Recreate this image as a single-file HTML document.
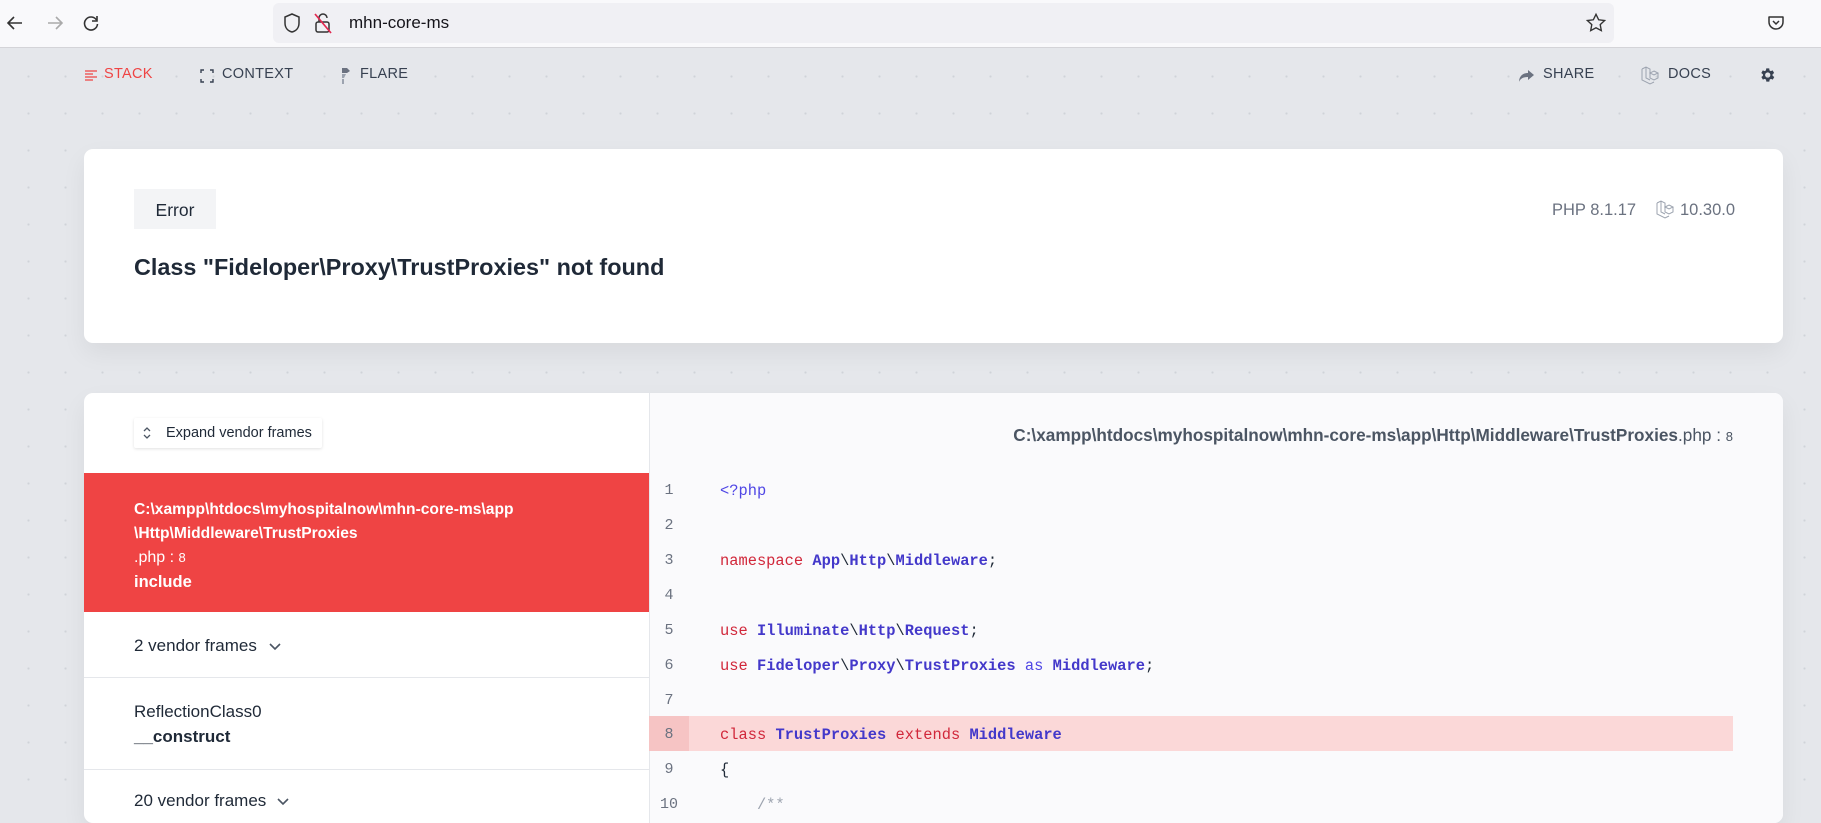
<!DOCTYPE html>
<html><head><meta charset="utf-8"><style>
*{box-sizing:border-box;margin:0;padding:0}
body{width:1821px;height:804px;overflow:hidden;font-family:"Liberation Sans",sans-serif;background:#e5e7eb;position:relative;color:#1f2937}
.bg{position:absolute;left:0;top:48px;width:1821px;height:756px;background-color:#e5e7eb;background-image:radial-gradient(circle,#d0d3d8 1px,transparent 1.2px);background-size:37px 37px;background-position:10px 10px}
.chrome{position:absolute;left:0;top:0;width:1821px;height:48px;background:#f9f9fb;border-bottom:1px solid #d4d4d8}
.url{position:absolute;left:273px;top:3px;width:1341px;height:40px;background:#f0f0f4;border-radius:6px}
.abs{position:absolute}
.nav{position:absolute;top:66px;font-size:14.5px;color:#374151;letter-spacing:.3px}
.card{position:absolute;background:#fff;border-radius:9px;box-shadow:0 10px 25px rgba(0,0,0,.06)}
.code{font-family:"Liberation Mono",monospace;font-size:15.4px}
.ln{position:absolute;left:649px;width:56px;text-align:center;color:#6b7280;font-family:"Liberation Mono",monospace;font-size:15px}
.cl{position:absolute;left:720px;white-space:pre}
.k{color:#d1273a}.c{color:#4338ca;font-weight:bold}.p{color:#4f46e5}
</style></head><body>
<div class="bg"></div>
<div class="chrome">
 <svg class="abs" style="left:4px;top:12px" width="22" height="22" viewBox="0 0 22 22"><path d="M18 11H4M10 5l-6 6 6 6" stroke="#333" stroke-width="1.6" fill="none"/></svg>
 <svg class="abs" style="left:44px;top:12px" width="22" height="22" viewBox="0 0 22 22"><path d="M4 11h14M12 5l6 6-6 6" stroke="#aaa" stroke-width="1.6" fill="none"/></svg>
 <svg class="abs" style="left:80px;top:12px" width="22" height="22" viewBox="0 0 22 22"><path d="M16.5 8A6.5 6.5 0 1 0 17.5 12" stroke="#333" stroke-width="1.6" fill="none"/><path d="M17 4v5h-5" stroke="#333" stroke-width="1.6" fill="none"/></svg>
 <div class="url"></div>
 <svg class="abs" style="left:282px;top:12px" width="20" height="22" viewBox="0 0 20 22"><path d="M10 2L3 5v6c0 5 3 8 7 9 4-1 7-4 7-9V5z" stroke="#333" stroke-width="1.5" fill="none"/></svg>
 <svg class="abs" style="left:313px;top:11px" width="20" height="24" viewBox="0 0 20 24"><rect x="3" y="11" width="13" height="10" rx="2" stroke="#333" stroke-width="1.5" fill="none"/><path d="M6 11V7a4 4 0 0 1 8 0" stroke="#333" stroke-width="1.5" fill="none"/><path d="M2 3l16 19" stroke="#e22850" stroke-width="1.7"/></svg>
 <div class="abs" style="left:349px;top:13px;font-size:17px;color:#15141a">mhn-core-ms</div>
 <svg class="abs" style="left:1585px;top:12px" width="22" height="22" viewBox="0 0 24 24"><path d="M12 2.5l2.9 6 6.5.8-4.8 4.5 1.2 6.5L12 17.2l-5.8 3.1 1.2-6.5L2.6 9.3l6.5-.8z" stroke="#333" stroke-width="1.5" fill="none"/></svg>
 <svg class="abs" style="left:1766px;top:13px" width="20" height="20" viewBox="0 0 20 20"><path d="M3 4h14v5a7 7 0 0 1-14 0z" stroke="#333" stroke-width="1.5" fill="none" stroke-linejoin="round"/><path d="M7 8l3 3 3-3" stroke="#333" stroke-width="1.5" fill="none"/></svg>
</div>

<svg class="abs" style="left:84px;top:69px" width="14" height="14" viewBox="0 0 14 14"><path d="M1 2h12M1 5h8M1 8h12M1 11h8" stroke="#ef4444" stroke-width="1.3"/></svg>
<div class="nav" style="left:104px;color:#ef4444">STACK</div>
<svg class="abs" style="left:200px;top:69px" width="14" height="14" viewBox="0 0 14 14"><path d="M1 4V1h3M10 1h3v3M13 10v3h-3M4 13H1v-3" stroke="#374151" stroke-width="1.4" fill="none"/></svg>
<div class="nav" style="left:222px">CONTEXT</div>
<svg class="abs" style="left:340px;top:67px" width="12" height="18" viewBox="0 0 12 18"><path d="M2 1h5l3 3-3 2H2z" fill="#6b7280"/><path d="M2 7h4l-2 4H2zM2 12h2v5H2z" fill="#9ca3af"/></svg>
<div class="nav" style="left:360px">FLARE</div>
<svg class="abs" style="left:1518px;top:69px" width="17" height="14" viewBox="0 0 17 14"><path d="M10 1l6 5-6 5V8C5 8 2 10 1 13 1 8 4 4 10 4z" fill="#6b7280"/></svg>
<div class="nav" style="left:1543px">SHARE</div>
<svg class="abs" style="left:1641px;top:66px" width="18" height="19" viewBox="0 0 18 19"><path d="M1 3l4-2 4 2v9l4 2 4-2V7M1 3v11l8 4 4-2M5 1v11l4 2M13 5l4 2-4 2-4-2z" stroke="#9ca3af" stroke-width="1" fill="none"/></svg>
<div class="nav" style="left:1668px">DOCS</div>
<svg class="abs" style="left:1758px;top:66px" width="18" height="18" viewBox="0 0 24 24"><path fill="#374151" d="M19.4 13a7.6 7.6 0 0 0 0-2l2.1-1.6-2-3.5-2.5 1a7.5 7.5 0 0 0-1.7-1L15 3.2h-4l-.4 2.7a7.5 7.5 0 0 0-1.7 1l-2.5-1-2 3.5L6.6 11a7.6 7.6 0 0 0 0 2l-2.1 1.6 2 3.5 2.5-1a7.5 7.5 0 0 0 1.7 1l.4 2.7h4l.4-2.7a7.5 7.5 0 0 0 1.7-1l2.5 1 2-3.5zM13 15.5a3.5 3.5 0 1 1 0-7 3.5 3.5 0 0 1 0 7z"/></svg>

<div class="card" style="left:84px;top:149px;width:1699px;height:194px"></div>
<div class="abs" style="left:134px;top:189px;width:82px;height:40px;background:#f3f4f6;font-size:17.5px;color:#1f2937;text-align:center;line-height:42px">Error</div>
<div class="abs" style="left:134px;top:254px;font-size:23.4px;font-weight:bold;color:#1f2937">Class "Fideloper\Proxy\TrustProxies" not found</div>
<div class="abs" style="left:1552px;top:201px;font-size:16.5px;color:#6b7280">PHP 8.1.17</div>
<svg class="abs" style="left:1656px;top:200px" width="18" height="19" viewBox="0 0 18 19"><path d="M1 3l4-2 4 2v9l4 2 4-2V7M1 3v11l8 4 4-2M5 1v11l4 2M13 5l4 2-4 2-4-2z" stroke="#9ca3af" stroke-width="1" fill="none"/></svg>
<div class="abs" style="left:1680px;top:201px;font-size:16.5px;color:#6b7280">10.30.0</div>

<div class="card" style="left:84px;top:393px;width:1699px;height:430px;overflow:hidden">
 <div class="abs" style="left:565px;top:0;width:1134px;height:430px;background:#fafafc;border-left:1px solid #e5e7eb"></div>
</div>
<div class="abs" style="left:134px;top:418px;width:188px;height:30px;background:#fff;box-shadow:0 1px 3px rgba(0,0,0,.12);border-radius:2px;font-size:14.5px;color:#1f2937;line-height:30px;padding-left:32px">Expand vendor frames</div>
<svg class="abs" style="left:142px;top:425px" width="10" height="16" viewBox="0 0 10 16"><path d="M2 6l3-3 3 3M2 10l3 3 3-3" stroke="#4b5563" stroke-width="1.3" fill="none"/></svg>

<div class="abs" style="left:84px;top:473px;width:565px;height:139px;background:#ef4444;color:#fff;padding:25px 0 0 50px">
 <div style="font-size:15.6px;font-weight:bold;line-height:24px">C:\xampp\htdocs\myhospitalnow\mhn-core-ms\app<br>\Http\Middleware\TrustProxies</div>
 <div style="font-size:16px;line-height:24px">.php : <span style="font-size:13px">8</span></div>
 <div style="font-size:16.5px;font-weight:bold;line-height:24px">include</div>
</div>
<div class="abs" style="left:134px;top:636px;font-size:17px;color:#1f2937">2 vendor frames</div>
<svg class="abs" style="left:268px;top:641px" width="14" height="12" viewBox="0 0 14 12"><path d="M2 3l5 5 5-5" stroke="#4b5563" stroke-width="1.6" fill="none"/></svg>
<div class="abs" style="left:84px;top:677px;width:565px;height:1px;background:#e5e7eb"></div>
<div class="abs" style="left:134px;top:702px;font-size:17px;color:#1f2937">ReflectionClass0</div>
<div class="abs" style="left:134px;top:727px;font-size:17px;font-weight:bold;color:#1f2937">__construct</div>
<div class="abs" style="left:84px;top:769px;width:565px;height:1px;background:#e5e7eb"></div>
<div class="abs" style="left:134px;top:791px;font-size:17px;color:#1f2937">20 vendor frames</div>
<svg class="abs" style="left:276px;top:796px" width="14" height="12" viewBox="0 0 14 12"><path d="M2 3l5 5 5-5" stroke="#4b5563" stroke-width="1.6" fill="none"/></svg>

<div class="abs" style="right:88px;top:425px;font-size:17.2px;color:#4b5563;white-space:nowrap"><b>C:\xampp\htdocs\myhospitalnow\mhn-core-ms\app\Http\Middleware\TrustProxies</b>.php : <span style="font-size:13px">8</span></div>

<div class="abs" style="left:649px;top:716px;width:1084px;height:35px;background:#fbd8d8"></div>
<div class="abs" style="left:649px;top:716px;width:40px;height:35px;background:#f6c4c4"></div>

<div class="code">
<div class="ln" style="top:482px;width:40px">1</div><div class="cl p" style="top:482px">&lt;?php</div>
<div class="ln" style="top:517px;width:40px">2</div>
<div class="ln" style="top:552px;width:40px">3</div><div class="cl" style="top:552px"><span class="k">namespace</span> <span class="c">App</span>\<span class="c">Http</span>\<span class="c">Middleware</span>;</div>
<div class="ln" style="top:587px;width:40px">4</div>
<div class="ln" style="top:622px;width:40px">5</div><div class="cl" style="top:622px"><span class="k">use</span> <span class="c">Illuminate</span>\<span class="c">Http</span>\<span class="c">Request</span>;</div>
<div class="ln" style="top:657px;width:40px">6</div><div class="cl" style="top:657px"><span class="k">use</span> <span class="c">Fideloper</span>\<span class="c">Proxy</span>\<span class="c">TrustProxies</span> <span class="p">as</span> <span class="c">Middleware</span>;</div>
<div class="ln" style="top:692px;width:40px">7</div>
<div class="ln" style="top:726px;width:40px">8</div><div class="cl" style="top:726px"><span class="k">class</span> <span class="c">TrustProxies</span> <span class="k">extends</span> <span class="c">Middleware</span></div>
<div class="ln" style="top:761px;width:40px">9</div><div class="cl" style="top:761px">{</div>
<div class="ln" style="top:796px;width:40px">10</div><div class="cl" style="top:796px;color:#9ca3af">    /**</div>
</div>
</body></html>
